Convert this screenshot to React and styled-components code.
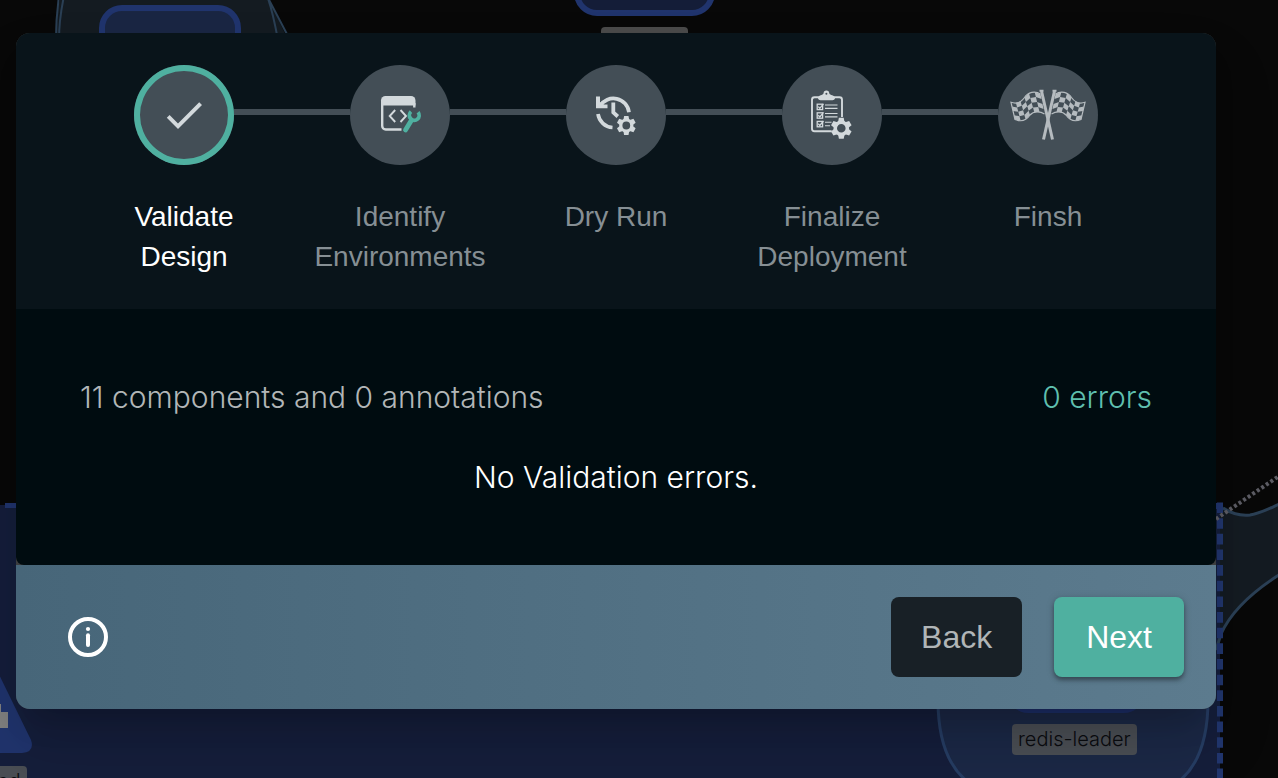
import React from "react";
import styled, { createGlobalStyle, css } from "styled-components";

const color = {
  canvas: "#080808",
  header: "#09141a",
  body: "#000c10",
  track: "#434e56",
  teal: "#4fb0a0",
  icon: "#d3d9dc",
  flag: "#b5bbbf",
};

const GlobalStyle = createGlobalStyle`
  *, *::before, *::after { box-sizing: border-box; }
  body { margin: 0; background: ${color.canvas}; }
`;

const Page = styled.div`
  position: relative;
  min-height: 100vh;
  overflow: hidden;
  padding: 33px 62px 69px 16px;
  background: ${color.canvas};
  font-family: "Liberation Sans", Arial, sans-serif;
`;

const Canvas = styled.div`
  position: absolute;
  inset: 0;
  overflow: hidden;

  svg {
    display: block;
    overflow: visible;
  }
`;

const NodeLabel = styled.span`
  position: absolute;
  left: ${(p) => p.$x}px;
  top: ${(p) => p.$y}px;
  padding: 0 6px;
  border-radius: 4px;
  background: #4a4e54;
  color: #0a0c10;
  font: 300 20px/31px Inter, sans-serif;
  white-space: nowrap;
`;

const Modal = styled.main`
  position: relative;
  border-radius: 14px;
  overflow: hidden;
  background: #3c3d3e;
`;

const ModalShadow = styled.div`
  position: relative;
  border-radius: 14px;
  box-shadow: 0 22px 30px -14px rgba(0, 0, 0, 0.2),
    0 36px 60px 4px rgba(0, 0, 0, 0.12);
`;

const Stepper = styled.ol`
  display: flex;
  margin: 0;
  padding: 32px 60px;
  list-style: none;
  background: ${color.header};
`;

const Step = styled.li`
  flex: 1 1 0;
  display: flex;
  flex-direction: column;
  gap: 32px;
`;

const Track = styled.div`
  display: flex;
  align-items: center;
`;

const Connector = styled.span`
  flex: 1;
  height: 6px;
  margin-bottom: 6px;
  background: ${(p) => (p.$hidden ? "transparent" : color.track)};
`;

const StepCircle = styled.span`
  display: flex;
  width: 100px;
  height: 100px;
  border-radius: 50%;
  background: ${color.track};
  ${(p) =>
    p.$active &&
    css`
      box-shadow: inset 0 0 0 6px ${color.teal};
    `}
`;

const StepLabel = styled.span`
  min-height: 80px;
  padding: 0 16px;
  color: ${(p) => (p.$active ? "#ffffff" : "#868f94")};
  font-size: 28px;
  line-height: 40px;
  text-align: center;
`;

const Body = styled.section`
  display: flex;
  flex-direction: column;
  gap: 32px;
  padding: 64px;
  border-radius: 0 0 8px 8px;
  background: ${color.body};
  font: 300 30px/48px Inter, sans-serif;
`;

const Summary = styled.div`
  display: flex;
  justify-content: space-between;
  color: #b2b6b7;
`;

const ErrorCount = styled.span`
  color: #5fbfae;
`;

const Message = styled.p`
  margin: 0;
  color: #ffffff;
  text-align: center;
`;

const Footer = styled.footer`
  display: flex;
  align-items: center;
  gap: 32px;
  padding: 32px 32px 32px 52px;
  background: linear-gradient(90deg, #476679, #5c7b8e);
`;

const InfoButton = styled.button`
  display: flex;
  margin-right: auto;
  padding: 0;
  border: 0;
  background: none;
  color: #ffffff;
  cursor: pointer;
`;

const Button = styled.button`
  height: 80px;
  padding: 0 ${(p) => (p.$primary ? 32 : 30)}px;
  border: 0;
  border-radius: 8px;
  background: ${(p) => (p.$primary ? color.teal : "#182026")};
  color: ${(p) => (p.$primary ? "#ffffff" : "#b0b5b7")};
  font: 400 32px/48px "Liberation Sans", Arial, sans-serif;
  cursor: pointer;
  ${(p) =>
    p.$primary &&
    css`
      box-shadow: 0 3px 4px rgba(0, 0, 0, 0.35), 0 1px 8px rgba(0, 0, 0, 0.15);
    `}
`;

const Drawing = ({ children }) => (
  <svg width="100" height="100" viewBox="0 0 100 100" fill="none" aria-hidden="true">
    {children}
  </svg>
);

const Gear = ({ x, y, scale = 1 }) => (
  <g transform={`translate(${x} ${y}) scale(${scale})`}>
    <circle r="5.5" stroke={color.icon} strokeWidth="3.2" />
    {[0, 60, 120, 180, 240, 300].map((a) => (
      <path
        key={a}
        d="M-2.9 -5.8L-2.2 -9.5H2.2L2.9 -5.8Z"
        fill={color.icon}
        transform={`rotate(${a})`}
      />
    ))}
  </g>
);

const CheckIcon = () => (
  <Drawing>
    <path
      transform="translate(26 26) scale(2)"
      d="M9 16.2 4.8 12l-1.4 1.4L9 19 21 7l-1.4-1.4z"
      fill={color.icon}
    />
  </Drawing>
);

const EnvironmentIcon = () => (
  <Drawing>
    <path d="M31 40.5V35.5a4.5 4.5 0 0 1 4.5-4.5H61a4.5 4.5 0 0 1 4.5 4.5V40.5Z" fill={color.icon} />
    <path
      d="M32.2 38V61a3.5 3.5 0 0 0 3.5 3.5H51.5M64.3 38V42.5"
      stroke={color.icon}
      strokeWidth="2.4"
    />
    <path d="M45.2 45L39.7 51L45.2 57M50.5 45L56 51L50.5 57" stroke={color.icon} strokeWidth="1.9" />
    <path d="M61.5 55.5L55.5 65.5" stroke={color.track} strokeWidth="7" />
    <path d="M61 46.7A4.9 4.9 0 1 0 68 47.2" stroke={color.teal} strokeWidth="3.8" />
    <path d="M61.3 55.5L55.5 65" stroke={color.teal} strokeWidth="4.8" strokeLinecap="round" />
  </Drawing>
);

const DryRunIcon = () => (
  <Drawing>
    <path d="M34 41A15.7 15.7 0 0 1 63 47.3" stroke={color.icon} strokeWidth="3.7" />
    <path d="M30 31.5H34V37.5L37 36L37.5 39.5H41.5V43.3H30Z" fill={color.icon} />
    <path d="M32 49A15.7 15.7 0 0 0 46.5 62.5" stroke={color.icon} strokeWidth="3.7" />
    <path d="M47.3 37.5V47.5L51.8 51.5" stroke={color.icon} strokeWidth="3.8" />
    <Gear x={60.3} y={60.5} />
  </Drawing>
);

const ChecklistIcon = () => (
  <Drawing>
    <path
      d="M49.7 66.2H32.5a2.5 2.5 0 0 1-2.5-2.5V34.7a2.5 2.5 0 0 1 2.5-2.5H57.5a2.5 2.5 0 0 1 2.5 2.5V52"
      stroke={color.icon}
      strokeWidth="1.9"
    />
    <path
      d="M36 33.5Q36 30.5 39.5 29.9Q41.3 29.5 41.6 28.3A2.8 2.8 0 0 1 47.2 28.3Q47.5 29.5 49.3 29.9Q53 30.5 53 33.5Q52.5 35.3 50.5 35.3H38.5Q36.500 35.3 36 33.5Z"
      fill={color.icon}
    />
    <circle cx="44.4" cy="28.7" r="1" fill={color.track} />
    {[39.2, 47.8, 56.4].map((y) => (
      <g key={y} stroke={color.icon} strokeWidth="1.3">
        <rect x="35.2" y={y} width="5.4" height="5.4" />
        <path d={`M36.3 ${y + 2.4}l1.5 1.7l3.7-4.5`} />
      </g>
    ))}
    <path
      d="M43 40H55.5M43 43.4H55.5M43 48.5H55.5M43 51.9H55.5M43 57.2H49.5M43 60.8H48"
      stroke={color.icon}
      strokeWidth="1.1"
    />
    <Gear x={59.3} y={63.3} scale={1.1} />
  </Drawing>
);

const bezier = (p, t) => {
  const u = 1 - t;
  return [0, 1].map(
    (i) =>
      u * u * u * p[0][i] + 3 * u * u * t * p[1][i] + 3 * u * t * t * p[2][i] + t * t * t * p[3][i]
  );
};
const along = ([a, b], t) => (t < 0.5 ? bezier(a, t * 2) : bezier(b, t * 2 - 1));

const flagTop = [
  [[7.5, 29], [13, 25.5], [20, 27], [23.5, 32.5]],
  [[23.5, 32.5], [27, 37.5], [32, 39], [37, 37.3]],
];
const flagBottom = [
  [[3.5, 49], [8, 46], [14.5, 46], [18, 50]],
  [[18, 50], [22, 56], [27, 57], [33, 54.5]],
];
const columns = 6;
const rows = 4;
const flagPoint = (c, r) => {
  const a = along(flagTop, c / columns);
  const b = along(flagBottom, c / columns);
  return [0, 1].map((i) => a[i] + ((b[i] - a[i]) * r) / rows).join(" ");
};
const flagCells = [];
for (let c = 0; c < columns; c += 1) {
  for (let r = 0; r < rows; r += 1) {
    if ((c + r) % 2 === 0) {
      flagCells.push(
        `M${flagPoint(c, r)}L${flagPoint(c + 1, r)}L${flagPoint(c + 1, r + 1)}L${flagPoint(c, r + 1)}Z`
      );
    }
  }
}

const Flag = () => (
  <g>
    <path d={flagCells.join("")} fill={color.flag} />
    <path
      d="M7.5 29C13 25.5 20 27 23.5 32.5C27 37.5 32 39 37 37.3L33 54.5C27 57 22 56 18 50C14.5 46 8 46 3.5 49"
      stroke={color.flag}
      strokeWidth="1.2"
    />
    <path d="M6.5 26L-4.5 74.5" stroke={color.flag} strokeWidth="3" />
    <path d="M4.5 25.8H8.5" stroke={color.flag} strokeWidth="2" />
  </g>
);

const FinishIcon = () => (
  <Drawing>
    <g transform="translate(50 0)">
      <Flag />
      <g transform="scale(-1 1)">
        <Flag />
      </g>
    </g>
  </Drawing>
);

const InfoIcon = () => (
  <svg width="40" height="40" viewBox="0 0 40 40" fill="none" aria-hidden="true">
    <circle cx="20" cy="20" r="18" stroke="currentColor" strokeWidth="4" />
    <circle cx="20" cy="12" r="2.1" fill="currentColor" />
    <path d="M20 18.3V28" stroke="currentColor" strokeWidth="4" strokeLinecap="round" />
  </svg>
);

const steps = [
  { label: "Validate Design", Icon: CheckIcon },
  { label: "Identify Environments", Icon: EnvironmentIcon },
  { label: "Dry Run", Icon: DryRunIcon },
  { label: "Finalize Deployment", Icon: ChecklistIcon },
  { label: "Finsh", Icon: FinishIcon },
];

const DesignCanvas = () => (
  <Canvas aria-hidden="true">
    <svg width="1278" height="778" viewBox="0 0 1278 778" fill="none">
      <path d="M55 40C55 26 57 10 60 0H269L288 40Z" fill="#141b21" />
      <path
        d="M56 40C56 24 57 10 59 -4M59 40C59 24 61 10 64 -4M267 -4C272 8 275 24 278 40M267 -4L289 38"
        stroke="#2a3f54"
        strokeWidth="2"
      />
      <rect x="102" y="8" width="136" height="80" rx="20" fill="#1a2643" stroke="#20346d" strokeWidth="6" />
      <rect x="577" y="-60" width="135" height="73" rx="20" fill="#141d38" stroke="#20346d" strokeWidth="6" />
      <rect x="601" y="27" width="87" height="31" rx="4" fill="#4a4a4a" />

      <path
        d="M1216 508C1232 504 1226 514 1243 515C1256 515 1266 509 1282 503V573C1250 593 1230 614 1221 634L1216 650Z"
        fill="#141b22"
      />
      <rect x="-10" y="505" width="1230" height="290" fill="#151e3b" />
      <path
        d="M1223 508C1232 514 1240 516 1250 515C1262 513 1270 508 1282 503M1282 573C1250 593 1230 614 1221 634L1216 650"
        stroke="#2b4056"
        strokeWidth="3"
      />
      <path d="M5 505.5H1217" stroke="#20346d" strokeWidth="5" strokeDasharray="11 5" />
      <path d="M1216 506H1223" stroke="#20346d" strokeWidth="6" />
      <path d="M1220 502.5V790" stroke="#21366f" strokeWidth="6" strokeDasharray="10.6 5.05" />
      <path d="M1216 519L1282 474" stroke="#5c5c64" strokeWidth="4" strokeDasharray="3 2.5" />

      <path
        d="M938 700C938 735 946 765 968 782H1178C1200 765 1208 735 1208 700Z"
        fill="#1b2846"
        stroke="#263d63"
        strokeWidth="3"
      />
      <rect x="1008" y="640" width="136" height="73" rx="20" fill="#1d2e68" />

      <path d="M-30 610L-8 660L31 740Q35 752 22 753H-30Z" fill="#20346d" />
      <path d="M-4 704H1V712H8V728H-4Z" fill="#7f7f7f" />
    </svg>
    <NodeLabel $x={1012} $y={724}>redis-leader</NodeLabel>
    <NodeLabel $x={-64} $y={766}>frontend</NodeLabel>
  </Canvas>
);

export default function App() {
  return (
    <>
      <GlobalStyle />
      <Page>
        <DesignCanvas />
        <ModalShadow>
          <Modal>
            <Stepper>
              {steps.map(({ label, Icon }, i) => (
                <Step key={label} aria-current={i === 0 ? "step" : undefined}>
                  <Track>
                    <Connector $hidden={i === 0} />
                    <StepCircle $active={i === 0}>
                      <Icon />
                    </StepCircle>
                    <Connector $hidden={i === steps.length - 1} />
                  </Track>
                  <StepLabel $active={i === 0}>{label}</StepLabel>
                </Step>
              ))}
            </Stepper>
            <Body>
              <Summary>
                <span>11 components and 0 annotations</span>
                <ErrorCount>0 errors</ErrorCount>
              </Summary>
              <Message>No Validation errors.</Message>
            </Body>
            <Footer>
              <InfoButton type="button" aria-label="Information">
                <InfoIcon />
              </InfoButton>
              <Button type="button">Back</Button>
              <Button type="button" $primary>Next</Button>
            </Footer>
          </Modal>
        </ModalShadow>
      </Page>
    </>
  );
}
